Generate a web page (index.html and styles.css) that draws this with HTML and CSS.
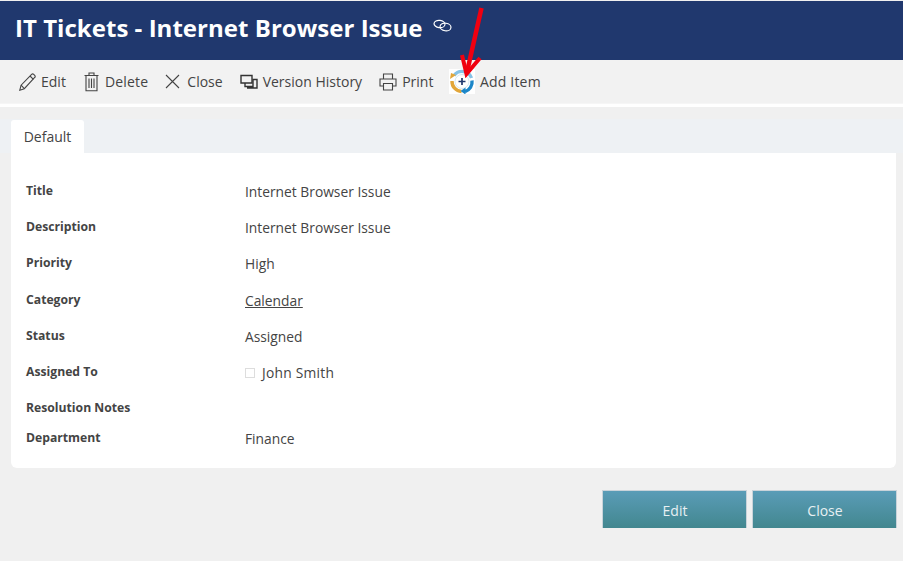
FILE: index.html
```html
<!DOCTYPE html>
<html lang="en">

<head>
    <meta charset="UTF-8">
    <meta name="viewport" content="width=device-width, initial-scale=1.0">
    <title>IT Tickets - Internet Browser Issue</title>
    <link rel="stylesheet" href="styles.css">
</head>

<body>
    <header class="title-bar">
        <h1>IT Tickets - Internet Browser Issue</h1>
        <svg class="link-icon" width="19" height="13" viewBox="0 0 19 13" fill="none" stroke="#fff" stroke-width="1.2">
            <ellipse cx="6.500" cy="5" rx="5.500" ry="3.600" transform="rotate(8 6.500 5)" />
            <ellipse cx="12.500" cy="8" rx="5.500" ry="3.800" transform="rotate(8 12.500 8)" />
        </svg>
    </header>

    <nav class="toolbar">
        <a class="tool">
            <svg width="17" height="18" viewBox="0 0 17 18" fill="none" stroke="#444" stroke-width="1.1">
                <path d="M.8 17.200l1.300-5L12.600 1.400a1.500 1.500 0 0 1 2.100 0l1 1a1.500 1.500 0 0 1 0 2.100L5.300 15.700z" />
                <path d="M2.100 12.200l3.200 3.500M11 3l3.400 3.400" />
            </svg>
            Edit
        </a>
        <a class="tool tool-wide">
            <svg width="17" height="20" viewBox="-1 0 17 20" fill="none" stroke="#444" stroke-width="1.1">
                <path d="M.5 3.500h14M5 3.500V1h5v2.500M2 3.500v15.300h11V3.500" />
                <path d="M5 6.500v9.500M7.500 6.500v9.500M10 6.500v9.500" />
            </svg>
            Delete
        </a>
        <a class="tool">
            <svg width="17" height="15" viewBox="0 0 17 15" fill="none" stroke="#444" stroke-width="1.1">
                <path d="M1 1l13 13M14 1L1 14" />
            </svg>
            Close
        </a>
        <a class="tool">
            <svg width="18" height="16" viewBox="0 0 18 16" fill="none" stroke="#333" stroke-width="1.4">
                <path d="M1 1.500h11v7.500H1z" />
                <path d="M5 9v3.500h8V5.500h4v8.500H7" />
            </svg>
            Version History
        </a>
        <a class="tool">
            <svg width="18" height="18" viewBox="0 0 18 18" fill="none" stroke="#444" stroke-width="1.1">
                <path d="M4.500 6V1h9v5M4.500 13H1V6h16v7h-3.500" />
                <path d="M4.500 10.500h9V17h-9z" />
            </svg>
            Print
        </a>
        <a class="tool tool-wide tool-add">
            <span class="add-icon">
                <svg width="26" height="25" viewBox="0 0 26 25" fill="none" stroke-width="3.400">
                    <circle cx="13" cy="12.500" r="7" stroke="#d5e8f4" stroke-width="1" />
                    <path d="M5 6.500A10 10 0 0 1 22.500 9" stroke="#86c2e6" />
                    <path d="M23 11.500a10 10 0 0 1-7 11" stroke="#1b86c8" />
                    <path d="M12.500 22.500A10 10 0 0 1 3 12" stroke="#e2a63a" />
                    <path d="M16.500 18.500v7l-5-3.500z" fill="#1b86c8" stroke="none" />
                    <path d="M1 10l6-4-5-2z" fill="#e2a63a" stroke="none" />
                    <path d="M9.500 12.500h7M13 9v7" stroke="#20386e" stroke-width="1.700" />
                </svg>
            </span>
            Add Item
        </a>
    </nav>

    <main class="content">
        <div class="tabs">
            <div class="tab">Default</div>
        </div>
        <section class="card">
            <div class="field">
                <div class="field-label">Title</div>
                <div class="field-value">Internet Browser Issue</div>
            </div>
            <div class="field">
                <div class="field-label">Description</div>
                <div class="field-value">Internet Browser Issue</div>
            </div>
            <div class="field">
                <div class="field-label">Priority</div>
                <div class="field-value">High</div>
            </div>
            <div class="field">
                <div class="field-label">Category</div>
                <div class="field-value"><a class="value-link">Calendar</a></div>
            </div>
            <div class="field">
                <div class="field-label">Status</div>
                <div class="field-value">Assigned</div>
            </div>
            <div class="field">
                <div class="field-label">Assigned To</div>
                <div class="field-value"><span class="user-pic"></span><span class="user-name">John Smith</span></div>
            </div>
            <div class="field field-empty">
                <div class="field-label">Resolution Notes</div>
                <div class="field-value"></div>
            </div>
            <div class="field">
                <div class="field-label">Department</div>
                <div class="field-value">Finance</div>
            </div>
        </section>
        <div class="actions">
            <button class="btn">Edit</button>
            <button class="btn">Close</button>
        </div>
    </main>

    <svg class="arrow" width="30" height="72" viewBox="0 0 30 72" fill="none" stroke="#f00010" stroke-width="4">
        <path d="M25.500 2L11 66" stroke-width="4.500" />
        <path d="M6 49l4.500 19L24 52" />
    </svg>
</body>

</html>
```

FILE: styles.css
```css
* {
    margin: 0;
    padding: 0;
    box-sizing: border-box;
}

body {
    position: relative;
    height: 561px;
    overflow: hidden;
    font-family: "Open Sans", "Noto Sans", Arial, sans-serif;
    font-size: 14px;
    color: #444;
    background-color: #f0f0f0;
}

.title-bar {
    display: flex;
    align-items: flex-start;
    height: 59px;
    margin-top: 1px;
    padding: 9px 0 0 15px;
    background-color: #20386e;
    color: #fff;
}

.title-bar h1 {
    font-size: 24px;
    font-weight: 700;
    letter-spacing: 0.03px;
    line-height: 35px;
}

.link-icon {
    margin: 9px 0 0 10px;
}

.toolbar {
    display: flex;
    align-items: center;
    gap: 17px;
    height: 44px;
    padding-left: 19px;
    border-bottom: 1px solid #f6f6f6;
    background-color: #f2f2f2;
}

.tool {
    display: flex;
    align-items: center;
    gap: 5px;
    color: #444;
    font-size: 14px;
}

.tool-wide {
    letter-spacing: 0.2px;
}

.tool-add {
    margin-left: -1.500px;
}

.add-icon {
    display: flex;
    width: 26px;
    height: 25px;
    background-color: #fff;
}

.content {
    padding: 0 7px 0 11px;
    border-top: 3px solid #fff;
}

.tabs {
    height: 46px;
    margin: 0 -7px 0 -11px;
    padding: 13px 0 0 11px;
    background: linear-gradient(#f0f0f0 0, #f0f0f0 12px, #eef1f4 12px);
}

.tab {
    width: 73px;
    height: 33px;
    border-radius: 3px 3px 0 0;
    background-color: #fff;
    text-align: center;
    line-height: 34px;
}

.card {
    height: 315px;
    padding: 20px 15px 0;
    border-radius: 0 0 6px 6px;
    background-color: #fff;
}

.field {
    display: flex;
    height: 36.200px;
}

.field-empty {
    height: 30px;
}

.field-label {
    width: 219px;
    font-size: 12.200px;
    font-weight: 700;
    line-height: 35px;
}

.field-value {
    font-size: 13.800px;
    line-height: 37px;
}

.value-link {
    text-decoration: underline;
}

.user-pic {
    display: inline-block;
    width: 10px;
    height: 10px;
    margin-right: 7px;
    border: 1px solid #ddd;
}

.user-name {
    letter-spacing: 0.25px;
}

.actions {
    display: flex;
    justify-content: flex-end;
    gap: 5px;
    margin: 22px -1px 0 0;
}

.btn {
    width: 145px;
    height: 38px;
    padding: 1px 0 0 1px;
    border: 1px solid #c9d3da;
    border-width: 1px 1px 0;
    background: linear-gradient(#5a9cb7, #42878f);
    color: #e8f0f3;
    font-family: inherit;
    font-size: 14px;
}

.arrow {
    position: absolute;
    left: 456px;
    top: 6px;
}
```
